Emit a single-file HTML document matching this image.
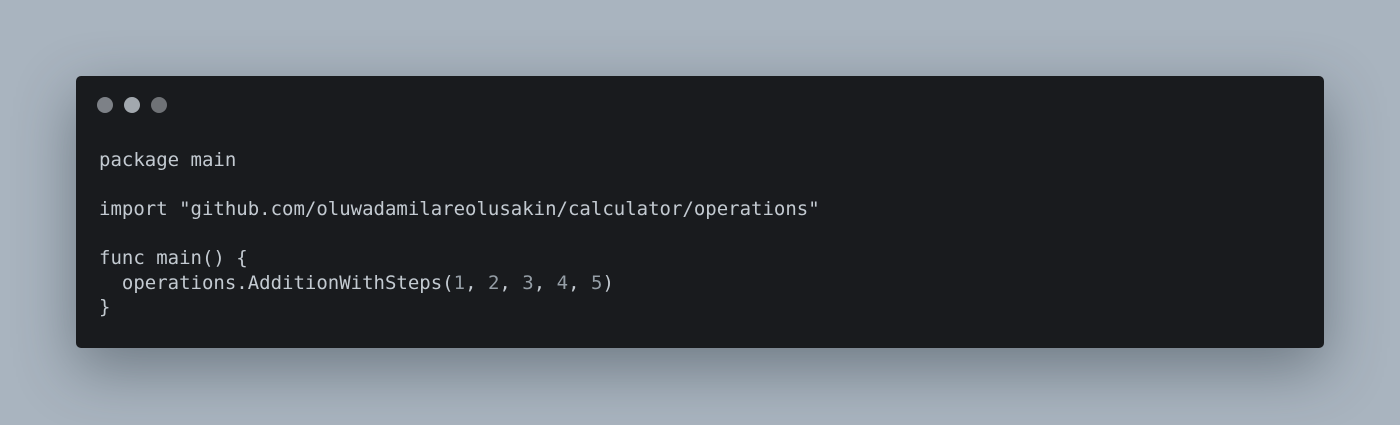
<!DOCTYPE html>
<html><head><style>
html,body{margin:0;padding:0;width:1400px;height:425px;overflow:hidden;background:#a9b4bf;}
.card{position:absolute;left:76px;top:76px;width:1248px;height:272px;background:#191b1e;border-radius:5px;box-shadow:0 20px 60px rgba(40,50,60,.45);}
.dot{position:absolute;top:21px;width:16px;height:16px;border-radius:50%;}
pre{position:absolute;left:23px;top:72px;margin:0;font-family:"DejaVu Sans Mono","Liberation Mono",monospace;font-size:19px;line-height:24.5px;color:#c3cad1;}
.n{color:#959ea6}
</style></head><body>
<div class="card">
<div class="dot" style="left:21px;background:#7d8187"></div>
<div class="dot" style="left:48px;background:#a2a8ae"></div>
<div class="dot" style="left:75px;background:#6f7276"></div>
<pre>package main

import "github.com/oluwadamilareolusakin/calculator/operations"

func main() {
  operations.AdditionWithSteps(<span class="n">1</span>, <span class="n">2</span>, <span class="n">3</span>, <span class="n">4</span>, <span class="n">5</span>)
}</pre>
</div>
</body></html>
